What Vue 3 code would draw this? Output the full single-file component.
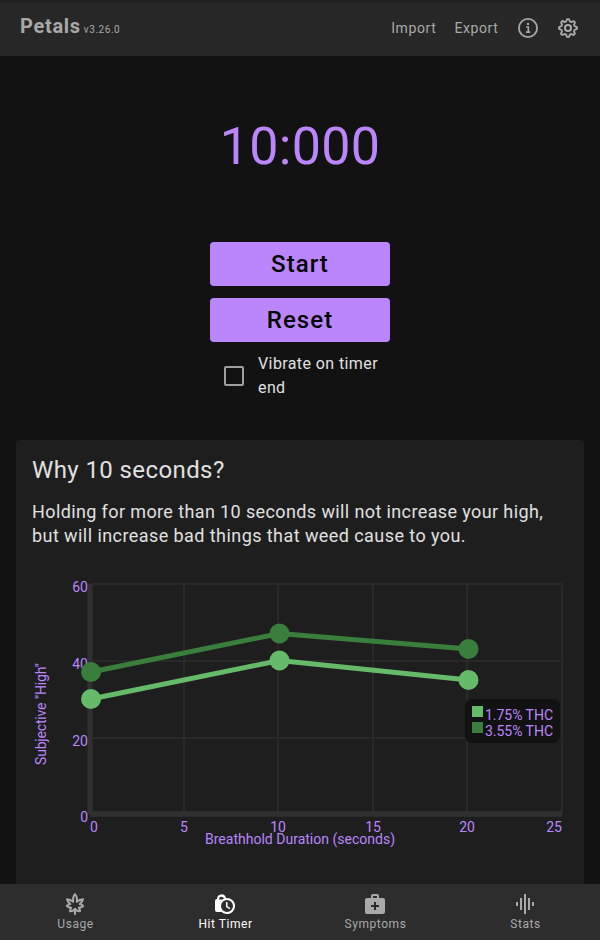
<script setup>
const nav = [
  { id: 'usage', label: 'Usage' },
  { id: 'timer', label: 'Hit Timer', active: true },
  { id: 'symptoms', label: 'Symptoms' },
  { id: 'stats', label: 'Stats' },
]
const series = [
  { name: '1.75% THC', color: '#66bb6a', points: [[91, 699], [279.5, 660.5], [468.5, 680]] },
  { name: '3.55% THC', color: '#397e3c', points: [[91, 672], [279.5, 633.5], [468.5, 649]] },
]
const columns = [184, 278, 373, 467, 562]
const rows = [584, 661, 738]
const yLabels = [[60, 592], [40, 669], [20, 746], [0, 822]]
const xLabels = [[0, 94], [5, 184], [10, 278], [15, 373], [20, 467], [25, 554]]
</script>

<template>
  <div class="app">
    <header class="bar">
      <div class="brand"><b>Petals</b><small>v3.26.0</small></div>
      <nav class="actions">
        <span class="import">Import</span>
        <span class="export">Export</span>
        <svg class="icon info" viewBox="0 0 24 24">
          <circle cx="12" cy="12" r="9.1" fill="none" stroke="currentColor" stroke-width="1.8" />
          <circle cx="12" cy="7.9" r="1.2" fill="currentColor" />
          <path d="M10.2 11H12.3V16M10 16.1H14.2" fill="none" stroke="currentColor" stroke-width="1.6" />
        </svg>
        <svg class="icon" viewBox="0 0 24 24" fill="none" stroke="currentColor" stroke-width="2" stroke-linejoin="round">
          <path d="M10.4 4.7 Q10.7 2.9 12 2.9 T13.6 4.7 Q13.9 5.6 14.8 5.8 Q15.4 6.1 16 5.7 Q17.4 4.7 18.4 5.6 T18.3 8 Q17.9 8.6 18.2 9.2 Q18.4 10.1 19.3 10.4 Q21.1 10.7 21.1 12 T19.3 13.6 Q18.4 13.9 18.2 14.8 Q17.9 15.4 18.3 16 Q19.3 17.4 18.4 18.4 T16 18.3 Q15.4 17.9 14.8 18.2 Q13.9 18.4 13.6 19.3 Q13.3 21.1 12 21.1 T10.4 19.3 Q10.1 18.4 9.2 18.2 Q8.6 17.9 8 18.3 Q6.6 19.3 5.6 18.4 T5.7 16 Q6.1 15.4 5.8 14.8 Q5.6 13.9 4.7 13.6 Q2.9 13.3 2.9 12 T4.7 10.4 Q5.6 10.1 5.8 9.2 Q6.1 8.6 5.7 8 Q4.7 6.6 5.6 5.6 T8 5.7 Q8.6 6.1 9.2 5.8 Q10.1 5.6 10.4 4.7Z" />
          <circle cx="12" cy="12" r="3.1" />
        </svg>
      </nav>
    </header>

    <main>
      <h1 class="time">10:000</h1>
      <section class="controls">
        <button>Start</button>
        <button>Reset</button>
        <label class="check"><span class="box"></span><span>Vibrate on timer end</span></label>
      </section>

      <section class="card">
        <h2>Why 10 seconds?</h2>
        <p><span class="lead">Holding for more than 10 seconds will not increase your high,</span> but will increase bad things that weed cause to you.</p>
        <svg class="chart" viewBox="32 560 536 324">
          <g stroke="#292929" stroke-width="2" fill="none">
            <path v-for="x in columns" :key="x" :d="`M${x} 583V814`" />
            <path v-for="y in rows" :key="y" :d="`M90 ${y}H563`" />
          </g>
          <path d="M90 584V814" stroke="#303030" stroke-width="5" />
          <path d="M90 814H562" stroke="#303030" stroke-width="5.5" />
          <text v-for="[v, y] in yLabels" :key="'y' + v" x="88" :y="y" text-anchor="end">{{ v }}</text>
          <text v-for="[v, x] in xLabels" :key="'x' + v" :x="x" y="832" text-anchor="middle">{{ v }}</text>
          <text x="300" y="844" text-anchor="middle" textLength="190">Breathhold Duration (seconds)</text>
          <text transform="translate(46 714) rotate(-90)" text-anchor="middle" textLength="102">Subjective "High"</text>
          <g v-for="s in series" :key="s.name" :fill="s.color">
            <polyline :points="s.points.join(' ')" fill="none" :stroke="s.color" stroke-width="5" />
            <circle v-for="p in s.points" :key="p[0]" :cx="p[0]" :cy="p[1]" r="10" />
          </g>
          <rect x="465" y="699" width="95" height="44" rx="7" fill="#121212" />
          <g v-for="(s, i) in series" :key="s.name">
            <rect x="472" :y="706 + i * 16" width="11" height="11" :fill="s.color" />
            <text x="485" :y="720 + i * 16" textLength="68">{{ s.name }}</text>
          </g>
        </svg>
      </section>
    </main>

    <footer class="tabs">
      <div v-for="n in nav" :key="n.id" class="tab" :class="{ active: n.active }">
        <svg class="icon" viewBox="0 0 24 24">
          <path v-if="n.id === 'usage'" fill="none" stroke="currentColor" stroke-width="2" stroke-linejoin="round" d="M12 2.2Q9.5 5 10.2 9.8Q7.5 7.4 4 7.2Q4.4 10 7.3 12.1Q5.2 12.4 3.8 14Q5.6 15.6 8.2 15.8Q7 17.2 7 19.2Q10 19.4 12 17Q14 19.4 17 19.2Q17 17.2 15.8 15.8Q18.4 15.6 20.2 14Q18.8 12.4 16.7 12.1Q19.6 10 20 7.2Q16.5 7.4 13.8 9.8Q14.5 5 12 2.2ZM12 16V22.8" />
          <g v-else-if="n.id === 'timer'">
            <path fill="currentColor" fill-rule="evenodd" d="M4 7A4.5 4.7 0 0 1 12.9 6.1A8 8 0 1 1 8.7 20H4A2 2 0 0 1 2 18V9A2 2 0 0 1 4 7ZM6 7.5H9.3A8 8 0 0 1 10.9 6.7A2.5 2.5 0 0 0 6 6.9ZM14 8A6 6 0 1 0 14 20A6 6 0 1 0 14 8Z" />
            <path d="M13 10H14.5V14.2L17.4 15.9L16.6 17.2L13 15Z" fill="currentColor" />
          </g>
          <path v-else-if="n.id === 'symptoms'" fill="currentColor" d="M20 6h-4V4c0-1.1-.9-2-2-2h-4c-1.1 0-2 .9-2 2v2H4c-1.1 0-2 .9-2 2v12c0 1.1.9 2 2 2h16c1.1 0 2-.9 2-2V8c0-1.1-.9-2-2-2zM10 4h4v2h-4V4zm6 11h-3v3h-2v-3H8v-2h3v-3h2v3h3v2z" />
          <path v-else fill="currentColor" d="M7 18h2V6H7v12zm4 4h2V2h-2v20zm-8-8h2v-4H3v4zm12 4h2V6h-2v12zm4-8v4h2v-4h-2z" />
        </svg>
        <span>{{ n.label }}</span>
      </div>
    </footer>
  </div>
</template>

<style>
body { background: #121212; }
</style>

<style scoped>
.app { display: flex; flex-direction: column; height: 940px; overflow: hidden; background: #121212; color: #e0e0e0; font-family: Roboto, sans-serif; }
.bar { flex: 0 0 56px; box-sizing: border-box; display: flex; align-items: center; justify-content: space-between; padding: 0 20px; background: linear-gradient(#1d1d1d, #272727 4px); color: #a9a9a9; }
.brand { display: flex; align-items: baseline; gap: 3px; padding-bottom: 4px; }
.brand b { font-size: 20px; line-height: 24px; letter-spacing: .7px; }
.brand small { font-size: 10px; letter-spacing: .55px; }
.actions { display: flex; align-items: center; font-size: 14px; letter-spacing: .6px; }
.export { margin: 0 17.6px 0 18px; }
.info { margin-right: 16px; }
.icon { display: block; width: 24px; height: 24px; flex: none; }
main { flex: 1; min-height: 0; display: flex; flex-direction: column; overflow: hidden; }
.time { margin: 59px 0 63px; height: 64px; line-height: 64px; text-align: center; color: #bb86fc; font-size: 52px; font-weight: 400; letter-spacing: .3px; }
.controls { width: 180px; margin: 0 auto; display: flex; flex-direction: column; gap: 12px; }
button { height: 44px; padding: 0; border: 0; border-radius: 4px; background: #bb86fc; color: #000; font: 500 24px Roboto, sans-serif; letter-spacing: 1.05px; }
.check { display: flex; align-items: center; gap: 14px; margin-top: -2px; padding-left: 14px; font-size: 16px; line-height: 24px; letter-spacing: .4px; }
.box { flex: none; box-sizing: border-box; width: 20px; height: 20px; border: 2px solid #a0a0a0; border-radius: 2px; }
.card { flex: none; box-sizing: border-box; margin: 40px 16px 0; height: 460px; padding: 14px 16px; border-radius: 4px; background: #1e1e1e; }
h2 { margin: 0; font-size: 24px; font-weight: 400; line-height: 32px; letter-spacing: .4px; }
p { margin: 14px 0 12px; font-size: 18px; line-height: 24px; letter-spacing: .43px; }
.lead { display: block; letter-spacing: .385px; }
.chart { display: block; width: 536px; height: 324px; }
.chart text { fill: #bb86fc; font-size: 14px; }
.tabs { flex: 0 0 56px; display: flex; background: #2d2d2d; color: #a9a9a9; }
.tab { flex: 1; display: flex; flex-direction: column; align-items: center; padding-top: 8px; font-size: 12px; line-height: 16px; letter-spacing: .55px; }
.tab span { padding-left: 1px; }
.active { color: #fff; }
</style>
